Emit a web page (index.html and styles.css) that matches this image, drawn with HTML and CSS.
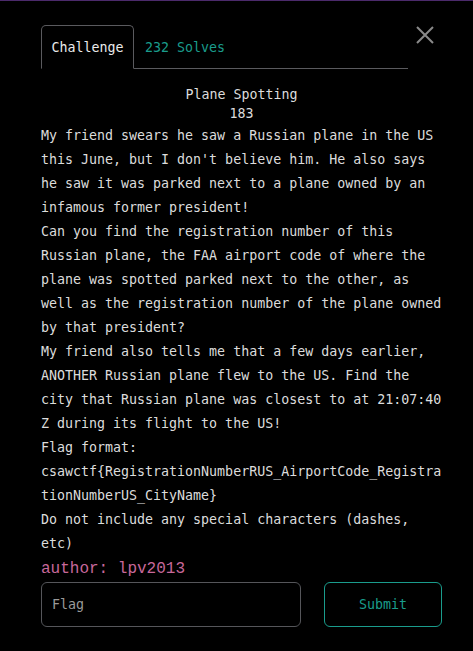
FILE: index.html
```html
<!DOCTYPE html>
<html>
<head>
<meta charset="utf-8">
<link rel="stylesheet" href="styles.css">
</head>
<body>
<div class="modal">
  <div class="header">
    <nav class="tabs">
      <span class="tab active">Challenge</span>
      <span class="tab solves">232 Solves</span>
    </nav>
    <button class="close" aria-label="Close">
      <svg width="18" height="18" viewBox="0 0 18 18"><path d="M1 1L17 17M17 1L1 17" stroke="#8a8a8a" stroke-width="2" fill="none"/></svg>
    </button>
  </div>
  <div class="title">
    <div>Plane Spotting</div>
    <div>183</div>
  </div>
  <div class="desc">
    <p>My friend swears he saw a Russian plane in the US this June, but I don't believe him. He also says he saw it was parked next to a plane owned by an infamous former president!</p>
    <p>Can you find the registration number of this Russian plane, the FAA airport code of where the plane was spotted parked next to the other, as well as the registration number of the plane owned by that president?</p>
    <p>My friend also tells me that a few days earlier, ANOTHER Russian plane flew to the US. Find the city that Russian plane was closest to at 21:07:40 Z during its flight to the US!</p>
    <p>Flag format:</p>
    <p class="flag">csawctf{RegistrationNumberRUS_AirportCode_RegistrationNumberUS_CityName}</p>
    <p>Do not include any special characters (dashes, etc)</p>
    <p class="author">author: lpv2013</p>
  </div>
  <form class="submit-row">
    <input class="flag-input" type="text" placeholder="Flag">
    <button class="submit" type="button">Submit</button>
  </form>
</div>
</body>
</html>
```

FILE: styles.css
```css
html, body {
  margin: 0;
  padding: 0;
  background: #000;
}
body {
  border-top: 1px solid #4b2a6b;
  height: 650px;
  font-family: "DejaVu Sans Mono", monospace;
  color: #dcdcdc;
  font-size: 13.3px;
}
.modal {
  width: 401px;
  margin-left: 41px;
  padding-top: 24px;
}
.header {
  display: flex;
  align-items: flex-start;
}
.tabs {
  display: flex;
  width: 367px;
  border-bottom: 1px solid #5a5a5e;
  height: 43px;
}
.tab {
  display: flex;
  align-items: center;
  padding: 0 10px;
  height: 44px;
  box-sizing: border-box;
  font-size: 13.3px;
}
.tab.active {
  border: 1px solid #5a5a5e;
  border-bottom: 1px solid #000;
  border-radius: 5px 5px 0 0;
  width: 93px;
  justify-content: center;
  padding: 0;
  color: #eaeaea;
}
.tab.solves {
  color: #1a9c8c;
  padding-left: 11px;
}
.close {
  background: none;
  border: none;
  padding: 0;
  margin-left: 8px;
  margin-top: 1px;
  width: 18px;
  height: 18px;
  display: flex;
}
.title {
  text-align: center;
  margin-top: 16px;
  line-height: 19px;
  font-size: 13.3px;
}
.desc {
  line-height: 24px;
  margin-top: 1px;
}
.desc p {
  margin: 0;
}
.flag {
  overflow-wrap: anywhere;
  word-break: break-all;
}
.author {
  font-family: "Liberation Mono", monospace;
  font-size: 16px;
  color: #c8689b;
  line-height: 26px;
}
.submit-row {
  display: flex;
  justify-content: space-between;
}
.flag-input {
  width: 260px;
  height: 45px;
  box-sizing: border-box;
  background: #000;
  border: 1px solid #55565a;
  border-radius: 6px;
  padding: 0 10px;
  font-family: "DejaVu Sans Mono", monospace;
  font-size: 13.3px;
  color: #ddd;
  outline: none;
}
.flag-input::placeholder {
  color: #9a9a9a;
}
.submit {
  width: 118px;
  height: 45px;
  background: #000;
  border: 1px solid #1a9c8c;
  border-radius: 6px;
  color: #1a9c8c;
  font-family: "DejaVu Sans Mono", monospace;
  font-size: 13.3px;
}
```
